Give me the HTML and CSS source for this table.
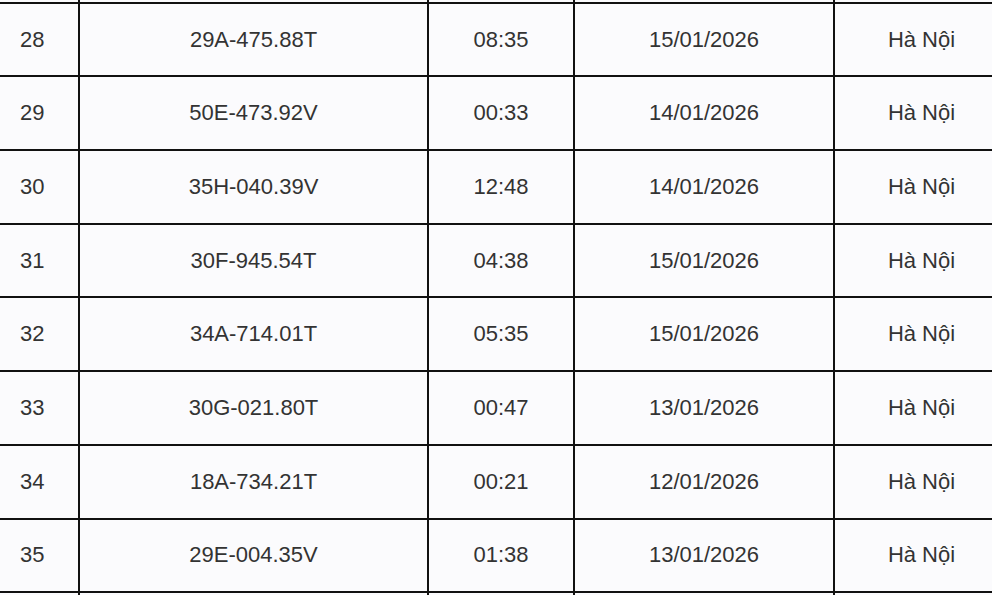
FILE: index.html
```html
<!DOCTYPE html>
<html lang="vi">
<head>
<meta charset="utf-8">
<title>Danh sách</title>
<link rel="stylesheet" href="styles.css">
</head>
<body>
<div class="viewport">
<table class="plates">
<colgroup>
<col class="c-no"><col class="c-plate"><col class="c-time"><col class="c-date"><col class="c-city">
</colgroup>
<tbody>
<tr class="edge" aria-hidden="true"><td></td><td></td><td></td><td></td><td></td></tr>
<tr><td class="no">28</td><td>29A-475.88T</td><td>08:35</td><td>15/01/2026</td><td>Hà Nội</td></tr>
<tr><td class="no">29</td><td>50E-473.92V</td><td>00:33</td><td>14/01/2026</td><td>Hà Nội</td></tr>
<tr><td class="no">30</td><td>35H-040.39V</td><td>12:48</td><td>14/01/2026</td><td>Hà Nội</td></tr>
<tr><td class="no">31</td><td>30F-945.54T</td><td>04:38</td><td>15/01/2026</td><td>Hà Nội</td></tr>
<tr><td class="no">32</td><td>34A-714.01T</td><td>05:35</td><td>15/01/2026</td><td>Hà Nội</td></tr>
<tr><td class="no">33</td><td>30G-021.80T</td><td>00:47</td><td>13/01/2026</td><td>Hà Nội</td></tr>
<tr><td class="no">34</td><td>18A-734.21T</td><td>00:21</td><td>12/01/2026</td><td>Hà Nội</td></tr>
<tr><td class="no">35</td><td>29E-004.35V</td><td>01:38</td><td>13/01/2026</td><td>Hà Nội</td></tr>
<tr class="edge" aria-hidden="true"><td></td><td></td><td></td><td></td><td></td></tr>
</tbody>
</table>
</div>
</body>
</html>
```
FILE: styles.css
```css
html, body {
  margin: 0;
  padding: 0;
  background: #fbfbfd;
}
.viewport {
  width: 992px;
  height: 595px;
  overflow: hidden;
}
.plates {
  border-collapse: collapse;
  table-layout: fixed;
  width: 1010px;
  margin-left: -2px;
  margin-top: -72px;
  font-family: "Liberation Sans", Arial, Helvetica, sans-serif;
  font-size: 22px;
  color: #333333;
}
.c-no { width: 80px; }
.c-plate { width: 349px; }
.c-time { width: 146px; }
.c-date { width: 260px; }
.c-city { width: 175px; }
.plates td {
  border: 2px solid #111111;
  height: 71.7px;
  padding: 0;
  text-align: center;
  vertical-align: middle;
  white-space: nowrap;
}
.plates td.no {
  text-align: left;
  padding-left: 20px;
}
```
